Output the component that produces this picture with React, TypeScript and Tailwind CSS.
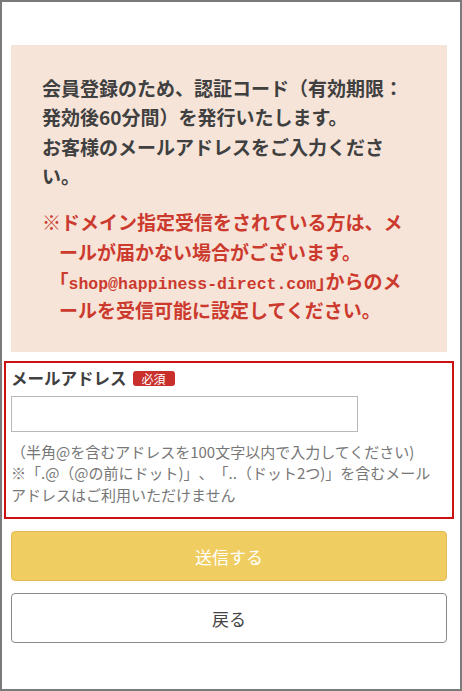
import React from "react";

const jp = "font-['Noto_Sans_CJK_JP','Noto_Sans',sans-serif]";

export default function App() {
  return (
    <div className={`w-[462px] h-[691px] border-2 border-[#7a7a7a] bg-white ${jp}`}>
      {/* Notice */}
      <div className="mt-[43px] ml-[9px] w-[436px] bg-[#f6e4d9] pt-[28px] pb-[27px] pl-[31px]">
        <div className="w-[370px] text-[19px] leading-[29.4px] font-bold text-[#404040]">
          <p>会員登録のため、認証コード（有効期限：発効後60分間）を発行いたします。</p>
          <p>お客様のメールアドレスをご入力ください。</p>
          <p className="mt-[16.5px] pl-[17px] -indent-[17px] text-[#cc3a2e]">
            ※ドメイン指定受信をされている方は、メールが届かない場合がございます。
            <span className="leading-none [font-feature-settings:'halt']">「</span>
            <span className="leading-none font-['Liberation_Mono',monospace] text-[16.5px]">shop@happiness-direct.com</span>
            <span className="leading-none [font-feature-settings:'halt']">」</span>
            からのメールを受信可能に設定してください。
          </p>
        </div>
      </div>

      {/* Email field */}
      <div className="mt-[9px] ml-[2px] w-[450px] border-2 border-[#cc1111] pl-[5px] pt-[4px] pb-[12px]">
        <div className="flex items-center h-[24px]">
          <span className="text-[16.5px] font-bold text-[#404040]">メールアドレス</span>
          <span className="ml-[6px] w-[42px] h-[15px] rounded-[3px] bg-[#c9302c] text-white text-[12px] leading-[15px] text-center">
            必須
          </span>
        </div>
        <input
          type="email"
          className="mt-[5px] block w-[347px] h-[36px] border border-[#b8b8b8] bg-white px-2 outline-none"
        />
        <p className="mt-[9px] text-[15px] leading-[21.5px] text-[#777] [text-spacing-trim:space-all]">
          （半角@を含むアドレスを100文字以内で入力してください)
          <br />
          ※「.@（@の前にドット)」、「..（ドット2つ)」を含むメール
          <br />
          アドレスはご利用いただけません
        </p>
      </div>

      {/* Buttons */}
      <div className="ml-[9px] w-[436px] mt-[12px] flex flex-col gap-[12px]">
        <button className="h-[50px] rounded-[4px] border border-[#e2bb55] bg-[#f0cd61] text-[17px] text-white">
          送信する
        </button>
        <button className="h-[50px] rounded-[4px] border border-[#8a8a8a] bg-white text-[17px] text-[#444]">
          戻る
        </button>
      </div>
    </div>
  );
}
